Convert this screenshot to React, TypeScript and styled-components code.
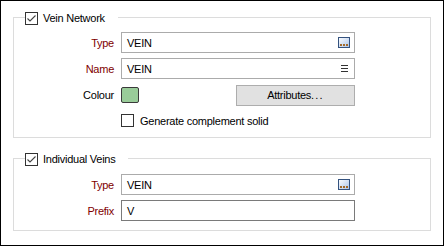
import React from "react";
import styled, { createGlobalStyle } from "styled-components";

const GlobalStyle = createGlobalStyle`
  html, body {
    margin: 0;
    padding: 0;
    background: #fff;
  }
  body {
    font-family: "Liberation Sans", Arial, sans-serif;
    font-size: 11px;
    letter-spacing: -0.25px;
    color: #000;
  }
`;

const Panel = styled.div`
  box-sizing: border-box;
  width: 444px;
  height: 246px;
  border: 1px solid #000;
  padding: 16px 0 0 12px;
  display: flex;
  flex-direction: column;
  gap: 20px;
  background: #fff;
`;

const Group = styled.section<{ $pad: string }>`
  position: relative;
  box-sizing: border-box;
  width: 418px;
  border: 1px solid #dcdcdc;
  padding: ${(p) => p.$pad};
`;

const Legend = styled.div`
  position: absolute;
  top: -6px;
  left: 11px;
  height: 13px;
  display: flex;
  align-items: center;
  gap: 5px;
  padding-right: 13px;
  background: #fff;
  line-height: 13px;
`;

const Box = styled.span`
  box-sizing: border-box;
  width: 13px;
  height: 13px;
  border: 1px solid #333;
  background: #fff;
  display: inline-flex;
  align-items: center;
  justify-content: center;
  flex: none;
`;

const Form = styled.div`
  display: grid;
  grid-template-columns: 100px 234px;
  grid-auto-rows: 21px;
  column-gap: 7px;
  row-gap: 5px;
  align-items: center;
`;

const Label = styled.span<{ $tone?: "red" | "plain" }>`
  text-align: right;
  color: ${(p) => (p.$tone === "red" ? "#800000" : "#000")};
`;

const Field = styled.div<{ $strong?: boolean }>`
  box-sizing: border-box;
  height: 21px;
  border: 1px solid ${(p) => (p.$strong ? "#7a7a7a" : "#ababab")};
  display: flex;
  align-items: center;
  justify-content: space-between;
  padding: 0 4px 0 5px;
  background: #fff;
`;

const Inline = styled.div<{ $spread?: boolean }>`
  display: flex;
  align-items: center;
  justify-content: ${(p) => (p.$spread ? "space-between" : "flex-start")};
  gap: 6px;
`;

const Swatch = styled.span<{ $color: string }>`
  box-sizing: border-box;
  width: 18px;
  height: 16px;
  border: 1px solid #3a3a3a;
  border-radius: 2px;
  background: ${(p) => p.$color};
`;

const Button = styled.button`
  box-sizing: border-box;
  width: 119px;
  height: 21px;
  margin-top: 1px;
  border: 1px solid #adadad;
  background: #e1e1e1;
  font: inherit;
  letter-spacing: inherit;
  color: #000;
  padding: 0;
`;

const Dots = styled.span`
  letter-spacing: 1.2px;
`;

const Check = () => (
  <svg width="11" height="11" viewBox="0 0 11 11">
    <polyline
      points="1.5,5.5 4,8 9.5,2.5"
      fill="none"
      stroke="#444"
      strokeWidth="1.1"
    />
  </svg>
);

const Checkbox = ({ checked }: { checked?: boolean }) => (
  <Box>{checked && <Check />}</Box>
);

const BrowseIcon = () => (
  <svg width="12" height="11" viewBox="0 0 12 11">
    <defs>
      <linearGradient id="brw" x1="0" y1="0" x2="1" y2="1">
        <stop offset="0" stopColor="#ffffff" />
        <stop offset="1" stopColor="#a8c2e8" />
      </linearGradient>
    </defs>
    <rect x="0.5" y="0.5" width="11" height="10" fill="url(#brw)" stroke="#34527e" />
    <rect x="2" y="7" width="2" height="2" fill="#a36a2a" />
    <rect x="5" y="7" width="2" height="2" fill="#a36a2a" />
    <rect x="8" y="7" width="2" height="2" fill="#a36a2a" />
  </svg>
);

const ListIcon = () => (
  <svg width="8" height="8" viewBox="0 0 8 8" style={{ marginRight: 1 }}>
    <rect x="0" y="0" width="7" height="1" fill="#333" />
    <rect x="0" y="3" width="7" height="1" fill="#333" />
    <rect x="0" y="6" width="7" height="1" fill="#333" />
  </svg>
);

export default function App() {
  return (
    <>
      <GlobalStyle />
      <Panel>
        <Group $pad="14px 0 6px">
          <Legend>
            <Checkbox checked />
            <span>Vein Network</span>
          </Legend>
          <Form>
            <Label $tone="red">Type</Label>
            <Field>
              <span>VEIN</span>
              <BrowseIcon />
            </Field>
            <Label $tone="red">Name</Label>
            <Field>
              <span>VEIN</span>
              <ListIcon />
            </Field>
            <Label>Colour</Label>
            <Inline $spread>
              <Swatch $color="#99cc99" />
              <Button>
                Attributes<Dots>...</Dots>
              </Button>
            </Inline>
            <span />
            <Inline>
              <Checkbox />
              <span>Generate complement solid</span>
            </Inline>
          </Form>
        </Group>
        <Group $pad="15px 0 9px">
          <Legend>
            <Checkbox checked />
            <span>Individual Veins</span>
          </Legend>
          <Form>
            <Label $tone="red">Type</Label>
            <Field>
              <span>VEIN</span>
              <BrowseIcon />
            </Field>
            <Label $tone="red">Prefix</Label>
            <Field $strong>
              <span>V</span>
            </Field>
          </Form>
        </Group>
      </Panel>
    </>
  );
}
